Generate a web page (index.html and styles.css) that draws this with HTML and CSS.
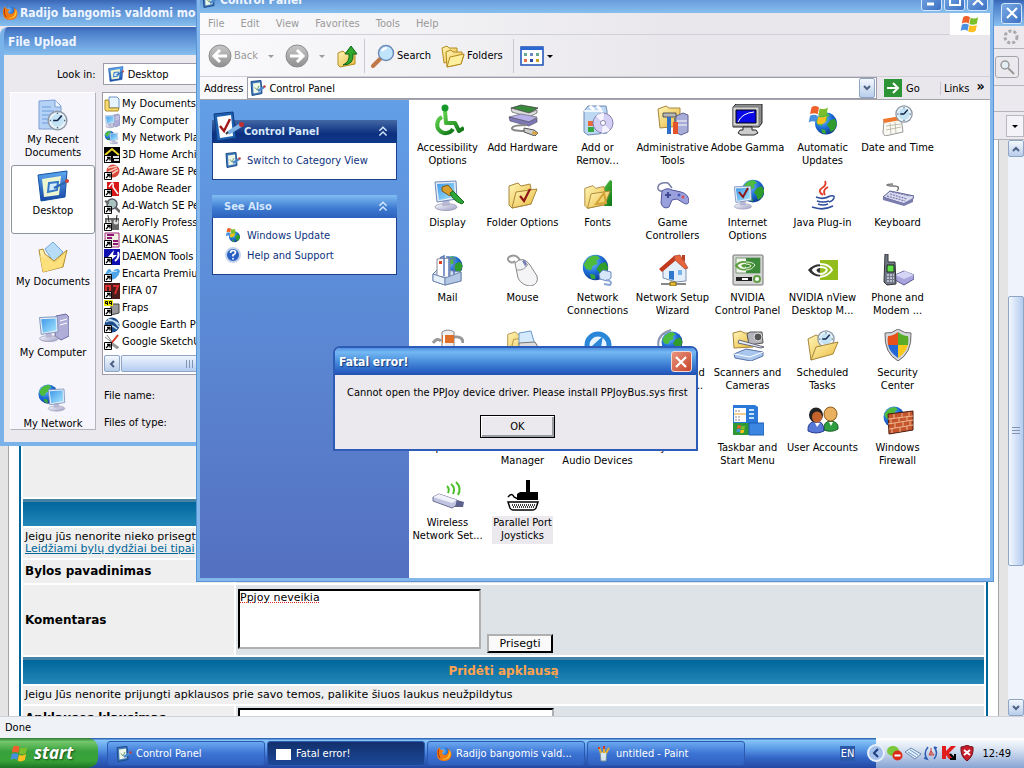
FILE: index.html
```html
<!DOCTYPE html>
<html lang="en">
<head>
    <meta charset="UTF-8" />
    <meta name="viewport" content="width=device-width, initial-scale=1" />
    <title>Desktop</title>
    <link rel="stylesheet" href="styles.css">
</head>
<body>
    <!-- Shared icons -->
    <svg class="sprite" width="0" height="0" aria-hidden="true">
        <defs>
            <radialGradient id="gGlobe" cx=".35" cy=".3" r=".8"><stop offset="0" stop-color="#7cc4ff"/><stop offset=".5" stop-color="#1f6fd8"/><stop offset="1" stop-color="#0a2f86"/></radialGradient>
            <linearGradient id="gFolder" x1="0" y1="0" x2="1" y2="1"><stop offset="0" stop-color="#fff6b8"/><stop offset="1" stop-color="#eab93c"/></linearGradient>
            <linearGradient id="gScreen" x1="0" y1="0" x2="1" y2="1"><stop offset="0" stop-color="#3f98e8"/><stop offset="1" stop-color="#a8e8ff"/></linearGradient>
            <linearGradient id="gSilver" x1="0" y1="0" x2="1" y2="1"><stop offset="0" stop-color="#ffffff"/><stop offset="1" stop-color="#9a9cc4"/></linearGradient>
            <linearGradient id="gBlue" x1="0" y1="0" x2="0" y2="1"><stop offset="0" stop-color="#5fa8f0"/><stop offset="1" stop-color="#1646a8"/></linearGradient>
            <linearGradient id="gGreen" x1="0" y1="0" x2="1" y2="1"><stop offset="0" stop-color="#5fd04c"/><stop offset="1" stop-color="#0c7414"/></linearGradient>
            <linearGradient id="gGray" x1="0" y1="0" x2="0" y2="1"><stop offset="0" stop-color="#c8c8c8"/><stop offset="1" stop-color="#8f8f8f"/></linearGradient>
        </defs>
        <symbol id="globe" viewBox="0 0 32 32"><circle cx="16" cy="16" r="14" fill="url(#gGlobe)"/><path d="M6 8q5-6 12-5l3 3-4 2 1 4-5 2-2 5-5-1-3-5z" fill="#4dbb3c"/><path d="M21 12l6-2 3 6-3 8-5 3-2-6-3-3z" fill="#2f9c2c"/><path d="M10 23l5 1 1 5-5-1z" fill="#3aa834"/></symbol>
        <symbol id="flag" viewBox="0 0 32 32"><path d="M5 5q5-4 11 0l-2 10q-5-3-11 0z" fill="#f0602a"/><path d="M17 6q6 3 12-1l-2 10q-6 4-12 1z" fill="#7bc02c"/><path d="M3 17q5-3 11 0l-2 10q-5-4-11 0z" fill="#4a90e0"/><path d="M15 18q6 3 12-1l-2 10q-6 4-12 1z" fill="#fbc020"/></symbol>
        <symbol id="folder" viewBox="0 0 32 32"><path d="M2 7l9-3 3 3 9-2 1 4v16L5 29 2 26z" fill="url(#gFolder)" stroke="#a8863a"/><path d="M9 13l21-3-6 15L5 29z" fill="url(#gFolder)" stroke="#a8863a"/></symbol>
        <symbol id="monitor" viewBox="0 0 32 32"><ellipse cx="14" cy="28" rx="11" ry="3.5" fill="url(#gSilver)" stroke="#8888a8" stroke-width=".7"/><path d="M11 20h6l1 7h-8z" fill="#b8b8d4"/><path d="M3 3l21-1 1 18-20 3z" fill="#e4ecf6" stroke="#7088b8"/><path d="M5 5l17-1 1 14-16 3z" fill="url(#gScreen)"/></symbol>
        <symbol id="checkpad" viewBox="0 0 32 32"><path d="M2 3l19-2 3 26-19 3z" fill="#1d5fb0" stroke="#0e3c80"/><path d="M5 6l14-2 2 21-13 2z" fill="#fff"/><path d="M8 15l4 5 6-12" fill="none" stroke="#a01818" stroke-width="2.4"/><path d="M16 22l13-8" stroke="#7fb2e6" stroke-width="4"/><path d="M14 23l2-2" stroke="#333" stroke-width="2"/><circle cx="29.500" cy="13.500" r="2.500" fill="#c03030"/></symbol>
        <symbol id="padsmall" viewBox="0 0 16 16"><path d="M1 1.500l10-1 1 13-10 2z" fill="#3f78bc" stroke="#1c4c88"/><path d="M3 3.500l7-1 .5 9.500-7 1.500z" fill="#eef6e4"/><path d="M5 7.500l2 2.500 2-4" fill="none" stroke="#6c9c7c"/><path d="M8 11l6-4" stroke="#4c88cc" stroke-width="2.500"/><circle cx="14.500" cy="6.500" r="1.300" fill="#c04040"/></symbol>
        <symbol id="desk" viewBox="0 0 32 32"><path d="M1 5l29-4-2 26-24 4z" fill="url(#gBlue)" stroke="#1250a0"/><path d="M5 9l19-3-2 19-15 2z" fill="#eef6d0"/><path d="M12 13l9-1-1 8-9 2z" fill="#d4ebff" stroke="#3478c8" stroke-width="2"/><path d="M17 18l12-6" stroke="#2f68b0" stroke-width="2.500"/><circle cx="30" cy="11" r="2" fill="#c43"/></symbol>
        <symbol id="clock" viewBox="0 0 32 32"><circle cx="16" cy="16" r="14" fill="#8d98a6"/><circle cx="16" cy="16" r="12" fill="#e8f3fa"/><circle cx="16" cy="16" r="9" fill="#c3e2f4"/><path d="M16 16l6-7M16 16h-6" stroke="#124" stroke-width="2.200"/><path d="M16 5v2M16 25v2M5 16h2M25 16h2" stroke="#567" stroke-width="2"/></symbol>
        <symbol id="firefox" viewBox="0 0 32 32"><circle cx="17" cy="15" r="12" fill="url(#gGlobe)"/><path d="M2 10q1-5 5-7 0 4 4 5 4 0 5 2-3 1-4 3 0 4 5 5 6 0 7-6 1-4-2-7 8 3 9 11 0 13-14 14Q3 30 2 18z" fill="#ef7a12"/><path d="M28 8q3 9-2 15-6 6-14 3 10 0 13-7 2-5 3-11z" fill="#ffc83a"/><path d="M5 7q-3 10 3 17" stroke="#a83008" stroke-width="2" fill="none"/></symbol>
        <symbol id="access" viewBox="0 0 32 32"><g fill="none" stroke="url(#gGreen)" stroke-width="4" stroke-linejoin="round"><path d="M13 7l1 12h9l4 8 5-3"/><path d="M14 12h7"/><path d="M10 13a8.500 8.500 0 1 0 11 12"/></g><circle cx="13" cy="4" r="3.500" fill="#159a2a"/></symbol>
        <symbol id="hardware" viewBox="0 0 32 32"><path d="M4 4l10-3 17 3-9 5z" fill="#3a8a3c" stroke="#333" stroke-width=".7"/><path d="M4 4l18 5 8-3v3l-8 4-17-5z" fill="#ddd" stroke="#555" stroke-width=".7"/><path d="M2 13l12-3 16 3-8 5z" fill="#b8b0e8" stroke="#667" stroke-width=".7"/><path d="M2 13l20 5 8-4v4l-8 4-19-5z" fill="#7f78b8" stroke="#556" stroke-width=".7"/><path d="M20 21q-14 0-15 3t13 3" fill="none" stroke="#888" stroke-width="2"/><path d="M17 24l10 2 4 3-3 3-11-4z" fill="#ccc" stroke="#555"/><path d="M26 27l5 2-2 2-4-1z" fill="#d9a43a"/></symbol>
        <symbol id="addremove" viewBox="0 0 32 32"><path d="M2 7l4-5h18l1 5v22l-19 2-4-3z" fill="#bcd8f2" stroke="#6c8ab4"/><path d="M2 7h18v24" fill="none" stroke="#fff" stroke-width="1.500"/><path d="M8 2l4 4M15 2l4 4" stroke="#fff" stroke-width="3"/><path d="M6 17h5v5H6z" fill="#e86a3a"/><path d="M6 23h6v5H6z" fill="#36a844"/><circle cx="21" cy="19" r="10" fill="#d4cff4" stroke="#8580b0"/><path d="M21 19L14 12a10 10 0 0 1 8-3zM21 19l7 7a10 10 0 0 1-8 3z" fill="#f6f4ff"/><circle cx="21" cy="19" r="2.500" fill="#fff" stroke="#88a"/></symbol>
        <symbol id="admin" viewBox="0 0 32 32"><path d="M1 5l8-3 3 2h11v18L3 24z" fill="url(#gFolder)" stroke="#a8863a"/><path d="M19 12l7-3 5 2v17l-7 3-6-3z" fill="#a8acd8" stroke="#5d6290"/><path d="M20 17h10M20 21h10" stroke="#fff"/><path d="M6 9h13v4H6z" fill="#b8b8b8" stroke="#555"/><path d="M10 13h4v17h-4z" fill="#2e6fc8"/><path d="M18 14v8" stroke="#777" stroke-width="2"/><path d="M16 18h5v12h-5z" fill="#e4532a"/></symbol>
        <symbol id="gamma" viewBox="0 0 32 32"><path d="M1 3l3-3h26v19l-3 4H1z" fill="#8c8c8c" stroke="#222"/><path d="M1 3h26v19H1z" fill="#d4d4d4" stroke="#777"/><path d="M4 6h20v13H4z" fill="#0808e8" stroke="#000"/><path d="M6 18Q10 9 22 8" fill="none" stroke="#fff"/><path d="M11 23h9v3h4l2 3-4 2H9l-3-2 2-3h3z" fill="#ccc" stroke="#222"/></symbol>
        <symbol id="update" viewBox="0 0 32 32"><use href="#globe" x="6" y="7" width="26" height="25"/><use href="#flag" x="0" y="0" width="24" height="22"/></symbol>
        <symbol id="date" viewBox="0 0 32 32"><path d="M2 16l17-3 2 15-18 4-2-3z" fill="#fbfbf4" stroke="#999"/><path d="M1 15l18-3v4L2 19z" fill="#f07830"/><path d="M4 22l15-2M4 26l15-3M8 19l1 11M13 18l1 11" stroke="#b5b0a0" stroke-width=".8"/><use href="#clock" x="12" y="0" width="20" height="20"/></symbol>
        <symbol id="display" viewBox="0 0 32 32"><use href="#monitor" x="0" y="0" width="32" height="32"/><path d="M10 8l6-2 6 7-4 4-8-5z" fill="#d8a030" stroke="#7d5a18"/><path d="M18 14l3-2 11 11-2 2q-9-3-12-11z" fill="#2fa638" stroke="#146c20"/></symbol>
        <symbol id="foldopt" viewBox="0 0 32 32"><use href="#folder" x="0" y="0" width="32" height="32"/><path d="M13 17l4 5 6-12" fill="none" stroke="#8e1616" stroke-width="2.200"/></symbol>
        <symbol id="fonts" viewBox="0 0 32 32"><path d="M18 14L28 1l2 1v25h-8z" fill="url(#gGreen)"/><use href="#folder" x="0" y="3" width="31" height="29"/><path d="M14 25l8-11 2 10z" fill="none" stroke="#d3a338" stroke-width="2"/></symbol>
        <symbol id="game" viewBox="0 0 32 32"><path d="M8 12Q0 13 1 8t10-4l4 5" fill="none" stroke="#777ca4" stroke-width="1.500"/><path d="M5 12q5-4 10-1l9 2q8 2 8 10-2 4-7 0l-5-3-5 1-3 7q-6 3-8-4z" fill="#9aa0dc" stroke="#50569c"/><path d="M8 16h6M11 13v6" stroke="#404894" stroke-width="2"/><circle cx="22" cy="16" r="1.500" fill="#4858b8"/><circle cx="26" cy="18" r="1.500" fill="#d85050"/></symbol>
        <symbol id="inet" viewBox="0 0 32 32"><use href="#globe" x="8" y="-1" width="26" height="26"/><use href="#monitor" x="0" y="4" width="25" height="28"/><path d="M7 13l4 5 5-9" fill="none" stroke="#8e1616" stroke-width="2"/></symbol>
        <symbol id="java" viewBox="0 0 32 32"><path d="M18 2q2 4-3 7t1 7M21 8q-6 3-3 8" fill="none" stroke="#e03a28" stroke-width="1.800"/><path d="M9 18q8 3 14-1M10 22q6 2 12 0M11 25q5 2 10 0M5 28q11 4 21-1" fill="none" stroke="#2f4e9e" stroke-width="1.700"/><path d="M23 17q5-1 4 2t-5 4" fill="none" stroke="#2f4e9e" stroke-width="1.400"/></symbol>
        <symbol id="keyboard" viewBox="0 0 32 32"><path d="M15 12q4-5-3-5T5 6t6-1" fill="none" stroke="#777" stroke-width="1.500"/><path d="M1 18l7-6 24 5-2 5-8 3z" fill="#dcdcf0" stroke="#55598c"/><path d="M1 18l21 6 9-5v4l-9 4-21-6z" fill="#7a7eac"/><path d="M5 17l18 5M8 15l17 5M10 13l18 4" stroke="#7c80b4" stroke-dasharray="2 1" stroke-width="1.300"/></symbol>
        <symbol id="mail" viewBox="0 0 32 32"><use href="#globe" x="9" y="0" width="23" height="24"/><path d="M1 20l5-5 23 3v9l-16 4L1 27z" fill="#cfe0f4" stroke="#7188b0"/><path d="M5 5l13-1v20l-13-2z" fill="#fff" stroke="#889"/><path d="M8 4l4-2v20M14 3h3v20M18 5l4-1v19" fill="none" stroke="#5a78b8" stroke-width="1.500"/><path d="M7 7h3v3H7z" fill="#e04020"/><path d="M1 20l12 4v7L1 27z" fill="#e6f0fb" stroke="#7188b0"/><path d="M13 24l16-6v9l-16 4z" fill="#b4c8e6" stroke="#7188b0"/></symbol>
        <symbol id="mouse" viewBox="0 0 32 32"><path d="M13 6Q9 0 4 2T2 7t6 0" fill="none" stroke="#999" stroke-width="2"/><path d="M8 9q8-8 15 2l7 11q2 8-6 10-9 0-13-8z" fill="#f4f4f6" stroke="#888"/><path d="M10 16q7 1 11-6M16 6q4 3 3 7" fill="none" stroke="#999"/><path d="M15 7l3-1 2 4-2 2z" fill="#7880b8"/></symbol>
        <symbol id="netconn" viewBox="0 0 32 32"><use href="#globe" x="-1" y="-1" width="29" height="29"/><path d="M17 20l4-4 8 2v6l-4 3-7-2z" fill="#d8e6fa" stroke="#6a8cc4"/><path d="M24 26q7 1 4 5l-6-1" fill="none" stroke="#8aa4d4" stroke-width="2"/></symbol>
        <symbol id="house" viewBox="0 0 32 32"><path d="M6 14l11-10 12 11v12l-10 1-13-4z" fill="#e4effa" stroke="#7d90b0"/><path d="M17 2L2 15l3 3L18 7z" fill="#c23a1c"/><path d="M17 2l6-1 8 13-3 1-10-9z" fill="#e8643c" stroke="#94301a" stroke-width=".6"/><path d="M25 1h3v7l-3-3z" fill="#b84024"/><path d="M12 17h5v9l-5-1z" fill="#2f78cc"/><path d="M21 16h4v5h-4z" fill="#78b4ee"/><path d="M4 30h25" stroke="#888" stroke-width="2"/><path d="M13 28h6v4h-6z" fill="#e4bb38" stroke="#806818"/></symbol>
        <symbol id="nveye" viewBox="0 0 32 20"><path d="M1 10q6-7 15-6 7 1 10 6-5 7-12 7Q6 17 1 10zm4 0q3 5 9 5 5-1 8-5-3-4-8-4-6 0-9 4zm5 0q2-3 5-2 3 0 3 2-2 3-4 3-3 0-4-3z" fill="currentColor" fill-rule="evenodd"/></symbol>
        <symbol id="nvidia" viewBox="0 0 32 32"><rect x="1" y="1" width="30" height="30" rx="1" fill="#d4d4d4" stroke="#777"/><path d="M4 4h24v15H4z" fill="#f2f8ee" stroke="#7a9a78"/><path d="M14 4h14v15H14z" fill="#3d8a3a"/><g color="#5b9c3c"><use href="#nveye" x="2" y="4" width="23" height="15"/></g><path d="M14 8q7 0 9 3-3 5-9 5M14 10q4 0 5 2-2 2-5 2" fill="none" stroke="#e4f4dc"/><rect x="4" y="23" width="16" height="4" fill="#222"/><path d="M10 24h6v2h-6z" fill="#fff"/><circle cx="25" cy="25" r="3" fill="#fff" stroke="#62a044" stroke-width="2"/></symbol>
        <symbol id="nview" viewBox="0 0 32 32"><g color="#333"><use href="#nveye" x="0" y="5" width="30" height="22"/></g><path d="M13 6h18v20H13z" fill="#93bd1c"/><path d="M13 10q9 0 12 6-4 6-12 7M13 13q6 0 7 3-2 4-7 4" fill="none" stroke="#fff" stroke-width="1.800"/></symbol>
        <symbol id="phone" viewBox="0 0 32 32"><path d="M13 21l9-4 10 4v4l-10 6-9-5z" fill="#a8a4dc" stroke="#5a5890"/><path d="M13 21l9 4 10-4-9-4z" fill="#d6d4f4"/><path d="M3 0h3v8h7l1 22-9 1L2 28z" fill="#71788a" stroke="#333"/><path d="M5 11h7v7H5z" fill="#5de048" stroke="#222"/><path d="M5 21h7M5 24h7M5 27h7" stroke="#d4d8e0" stroke-dasharray="2 1" stroke-width="1.500"/></symbol>
        <symbol id="power" viewBox="0 0 32 32"><path d="M1 14q4-6 8-2M22 8q9-1 9 6" fill="none" stroke="#999" stroke-width="3"/><path d="M10 3q6-4 12 0v25H10z" fill="#eee" stroke="#888"/><path d="M10 6h12v8H10z" fill="#e07028"/><path d="M12 5v22" stroke="#fff" stroke-width="2"/></symbol>
        <symbol id="printers" viewBox="0 0 32 32"><use href="#folder" x="-1" y="-2" width="27" height="30"/><path d="M12 4l12-2 4 14H12z" fill="#d5eafc" stroke="#6b9acb"/><path d="M12 14l16-1 3 5-5 8H12z" fill="#ddd" stroke="#777"/></symbol>
        <symbol id="quicktime" viewBox="0 0 32 32"><circle cx="16" cy="16" r="11" fill="#e8f4ff" stroke="#2a86d8" stroke-width="5"/><path d="M10 17L21 7l-2 11z" fill="#2a86d8"/></symbol>
        <symbol id="region" viewBox="0 0 32 32"><use href="#globe" x="3" y="1" width="24" height="24"/><path d="M14 1Q-2 6 2 20t22 7" fill="none" stroke="#8b93b0" stroke-width="2"/></symbol>
        <symbol id="scanner" viewBox="0 0 32 32"><path d="M1 4l8-2 3 2h9v14L2 19z" fill="url(#gFolder)" stroke="#a8863a"/><path d="M15 5l3-2h12l1 11-14 2z" fill="#b4b4bc" stroke="#555"/><circle cx="26" cy="8" r="4" fill="#555" stroke="#ddd"/><path d="M7 11l25 7-3 1L6 14z" fill="#e4f0fc" stroke="#667"/><path d="M2 25l12-5 17 3v4l-12 5L3 29z" fill="#a9c6ee" stroke="#5a74a4"/><path d="M2 25l16 3 13-5" fill="none" stroke="#fff"/></symbol>
        <symbol id="sched" viewBox="0 0 32 32"><path d="M1 10l8-4 4 2 12 1v12L4 31z" fill="url(#gFolder)" stroke="#a8863a"/><use href="#clock" x="9" y="0" width="20" height="20"/><path d="M9 18l22-5-5 12L4 31z" fill="url(#gFolder)" stroke="#a8863a"/></symbol>
        <symbol id="shield" viewBox="0 0 32 32"><path d="M16 0q7 5 13 4 1 20-13 28Q2 24 3 4q7 1 13-4z" fill="#d4d8de" stroke="#666"/><path d="M16 3v13H6Q5 11 6 7q5 0 10-4z" fill="#e8501c"/><path d="M16 3q5 4 10 4 1 4 0 9H16z" fill="#58ac28"/><path d="M6 16h10v13Q8 24 6 16z" fill="#2468d8"/><path d="M26 16H16v13q8-5 10-13z" fill="#f8c81c"/></symbol>
        <symbol id="taskmenu" viewBox="0 0 32 32"><path d="M1 1h22l3 2v19H1z" fill="#2a78d8"/><path d="M2 4h12v14H2z" fill="#fff"/><path d="M2 10h12" stroke="#e8a020"/><path d="M3 7h6M3 13h6M3 16h6" stroke="#888" stroke-dasharray="2 1"/><path d="M17 6h5M17 10h5M17 14h5" stroke="#bfe0ff" stroke-width="2"/><path d="M1 19h17v12H1z" fill="#2e9a34"/><path d="M17 19h15v12H17z" fill="#3a86e0" stroke="#1c5cb4"/><use href="#flag" x="4" y="20" width="10" height="10"/></symbol>
        <symbol id="users" viewBox="0 0 32 32"><path d="M17 26q-1-9 7-9 8 1 7 8-6 4-14 1z" fill="#2f9e40" stroke="#186026"/><ellipse cx="23.500" cy="10" rx="6.500" ry="7" fill="#e8b060" stroke="#8c5a18"/><path d="M1 27q-1-9 8-10 8 0 8 10-8 4-16 0z" fill="#5878d8" stroke="#2a3c90"/><ellipse cx="9" cy="11" rx="7" ry="7.500" fill="#222"/><ellipse cx="10" cy="13" rx="5" ry="5.500" fill="#c4642c"/><path d="M8 19l2 4 3-4M22 18l2 4 2-4" fill="#fff"/></symbol>
        <symbol id="firewall" viewBox="0 0 32 32"><use href="#globe" x="0" y="1" width="24" height="24"/><path d="M6 10l25-3v19L7 30z" fill="#c4552c" stroke="#4e1c10"/><path d="M6 15l25-3M6 20l25-4M7 25l24-4M12 10v5M20 9v4M27 8v4M9 15v5M17 13v5M25 12v5M13 19v5M21 18v5M28 16v5M10 24v5M18 23v5M25 22v4" stroke="#f0b690" stroke-width="1"/></symbol>
        <symbol id="wifi" viewBox="0 0 32 32"><path d="M15 7q3 3 1 7M19 5q5 4 2 10M24 3q6 6 2 13" fill="none" stroke="#4dbf2c" stroke-width="2"/><path d="M1 18l6-3 18 6v5l-5 3-19-7z" fill="#c0c4e0" stroke="#6c7094"/><path d="M1 18l6-3 18 6-5 3z" fill="#f0f2fa"/><path d="M25 21l7 2-1 5-8 0z" fill="#5d628c"/></symbol>
        <symbol id="joystick" viewBox="0 0 32 32"><path d="M19 1h4v12h8v8H10v-6l3-2h6z" fill="#000"/><path d="M1 18q4-5 6 0l4 2" fill="none" stroke="#000" stroke-width="1.500"/><path d="M1 23h30l-2 6q-1 2-3 2H6q-2 0-3-2z" fill="#fff" stroke="#000" stroke-width="1.500"/><path d="M5 26h23M6 28h21" stroke="#000" stroke-dasharray="1 1" stroke-width="1.500"/></symbol>
        <symbol id="recent" viewBox="0 0 32 32"><path d="M2 2l16-1 6 6v23H2z" fill="#b4d2f6" stroke="#7c9cd0"/><path d="M18 1v7h6" fill="#eef6ff" stroke="#7c9cd0"/><path d="M5 8h9M5 12h12M5 16h8M5 20h8M5 24h8" stroke="#6f9bdc"/><use href="#clock" x="9" y="10" width="23" height="23"/></symbol>
        <symbol id="mydocs" viewBox="0 0 32 32"><path d="M8 8l8-7 10 10-9 11z" fill="#b6dcf8" stroke="#72a6d4"/><path d="M2 9l4-1 2 5 9 7 13-11-4 17L6 31z" fill="url(#gFolder)" stroke="#b08a30"/><path d="M3 15l15 7 11-11-4 15L6 31z" fill="#fbe07c"/></symbol>
        <symbol id="computer" viewBox="0 0 32 32"><path d="M19 4l10-2 3 3v19l-8 4-6-4z" fill="#aeaed8" stroke="#6c6ca0"/><path d="M23 9l7-2M23 13l7-2" stroke="#fff"/><use href="#monitor" x="0" y="1" width="27" height="31"/></symbol>
        <symbol id="network" viewBox="0 0 32 32"><use href="#globe" x="0" y="0" width="22" height="22"/><use href="#monitor" x="9" y="1" width="24" height="31"/></symbol>
        <symbol id="docs" viewBox="0 0 16 16"><path d="M5 1h8l2 2v9H5z" fill="#e8f4ff" stroke="#6b96c8"/><path d="M1 4h3l1 2v6h10l-1 3H2l-1-1z" fill="#f8dc70" stroke="#a8882c"/></symbol>
        <symbol id="cut" viewBox="0 0 16 16"><path d="M.5 8.500h7v7h-7z" fill="#fff" stroke="#000"/><path d="M2 14l3-3M3 10.500h3v3" fill="none" stroke="#000" stroke-width="1.300"/></symbol>
        <symbol id="home3d" viewBox="0 0 16 16"><path d="M0 0h16v16H0z"/><path d="M1 8l7-6 7 6" fill="none" stroke="#f0d828" stroke-width="2"/><path d="M9 10h6M10 13h5" stroke="#ddd" stroke-width="2"/><use href="#cut"/></symbol>
        <symbol id="adaware" viewBox="0 0 16 16"><circle cx="9" cy="7" r="6.500" fill="#d84838"/><path d="M4 4l9-2M4 8l9-4M6 11l8-5" stroke="#f6c4b8" stroke-width="1.500"/><use href="#cut"/></symbol>
        <symbol id="reader" viewBox="0 0 16 16"><path d="M3 1h12v14H3z" fill="#d81818"/><path d="M5 6q5-8 4 0l5 7" fill="none" stroke="#fff" stroke-width="1.500"/><use href="#cut"/></symbol>
        <symbol id="adwatch" viewBox="0 0 16 16"><circle cx="8" cy="6" r="5" fill="#a9c4c0" stroke="#556" stroke-width="1.500"/><path d="M11 9l5 5M1 3l4 2" stroke="#666" stroke-width="2.500"/><use href="#cut"/></symbol>
        <symbol id="aerofly" viewBox="0 0 16 16"><path d="M1 3h14v12H1z" fill="#666"/><circle cx="5" cy="7" r="2.500" fill="#ddd"/><circle cx="12" cy="7" r="2.500" fill="#ddd"/><path d="M5 7l-1-7M12 7l1-7" stroke="#222"/><use href="#cut"/></symbol>
        <symbol id="alkonas" viewBox="0 0 16 16"><path d="M1 1h14v14H1z" fill="#f0f0e0" stroke="#a0287c"/><path d="M3 3h7M3 6h5M9 9h5M9 12h5" stroke="#8c1474" stroke-width="2"/><use href="#cut"/></symbol>
        <symbol id="daemon" viewBox="0 0 16 16"><path d="M0 0h16v16H0z" fill="#1010b0"/><path d="M10 1L4 8h4l-3 5 8-7H9z" fill="#fff"/><path d="M14 3q2 5-3 9" fill="none" stroke="#fff" stroke-width="2"/><use href="#cut"/></symbol>
        <symbol id="encarta" viewBox="0 0 16 16"><path d="M1 9q4-10 7-3 6-6 8-1-2 9-11 9z" fill="#4ea4e8"/><path d="M4 8q4-3 9-3" stroke="#cfeaff" fill="none"/><use href="#cut"/></symbol>
        <symbol id="fifa" viewBox="0 0 16 16"><path d="M0 0h16v16H0z" fill="#4a1c1c"/><path d="M2 3h4v7H2zM9 3h5l-3 8" fill="none" stroke="#d83030" stroke-width="2"/><use href="#cut"/></symbol>
        <symbol id="fraps" viewBox="0 0 16 16"><path d="M7 4h8v9l-8 2z" fill="#999" stroke="#444"/><path d="M0 0h9v6H0z" fill="#f0e800"/><path d="M1.500 1.500h2v2h-2zM3.500 3v2M5.500 1.500h2v2h-2zM7.500 3v2" fill="none" stroke="#000"/><use href="#cut"/></symbol>
        <symbol id="earth" viewBox="0 0 16 16"><circle cx="8" cy="8" r="7.500" fill="#1c4c8c"/><path d="M2 5q6-4 13 2M4 2q7 1 11 8M1 9q7-2 12 3" fill="none" stroke="#c4e0f4" stroke-width="1.500"/><use href="#cut"/></symbol>
        <symbol id="sketch" viewBox="0 0 16 16"><path d="M1 3l14 11M3 1l10 14" stroke="#888"/><path d="M14 1L6 11" stroke="#d83424" stroke-width="2"/><path d="M8 10l6 4" stroke="#999" stroke-width="3"/><use href="#cut"/></symbol>
        <symbol id="help" viewBox="0 0 16 16"><circle cx="8" cy="8" r="7" fill="#2860c4" stroke="#c4d4ec" stroke-width="2"/><path d="M5.500 6q0-2.500 2.500-2.500t2.500 2Q10.500 7 8 8v1.500M8 11v1.500" fill="none" stroke="#fff" stroke-width="1.700"/></symbol>
        <symbol id="back" viewBox="0 0 24 24"><circle cx="12" cy="12" r="11" fill="url(#gGray)" stroke="#8c8c8c"/><path d="M19 12H7M12 6l-6 6 6 6" fill="none" stroke="#fff" stroke-width="3"/></symbol>
        <symbol id="forward" viewBox="0 0 24 24"><circle cx="12" cy="12" r="11" fill="url(#gGray)" stroke="#8c8c8c"/><path d="M5 12h12M12 6l6 6-6 6" fill="none" stroke="#fff" stroke-width="3"/></symbol>
        <symbol id="up" viewBox="0 0 24 24"><path d="M2 9l5-2 2 2h10v11L4 23l-2-2z" fill="url(#gFolder)" stroke="#b48c20"/><path d="M7 21q7-3 6-11H9l6-8 6 8h-4q1 11-10 11z" fill="#2fa82c" stroke="#10641a"/></symbol>
        <symbol id="search" viewBox="0 0 24 24"><path d="M10 14L2 22" stroke="#c07848" stroke-width="4" stroke-linecap="round"/><circle cx="15" cy="9" r="7.500" fill="#c0e4fb" stroke="#6d8cb8" stroke-width="1.500"/><path d="M11 7q2-3 5-3" fill="none" stroke="#fff" stroke-width="2"/></symbol>
        <symbol id="folders" viewBox="0 0 24 24"><path d="M1 4l5-2 2 2h8v12L3 19z" fill="url(#gFolder)" stroke="#b48c20"/><path d="M5 8l5-2 2 2h9v3l2 0-3 9-14 3z" fill="url(#gFolder)" stroke="#b48c20"/><path d="M9 13l14-3-3 10-14 3z" fill="#fff0a0" stroke="#b48c20"/></symbol>
        <symbol id="views" viewBox="0 0 24 20"><path d="M1 1h22v18H1z" fill="#fff" stroke="#1c50b8" stroke-width="1.500"/><path d="M1 1h22v3H1z" fill="#2b68d0"/><path d="M4 7h3v3H4zM16 7h3v3h-3z" fill="#6aa890"/><path d="M10 7h3v3h-3z" fill="#6c8ac8"/><path d="M4 13h3v3H4z" fill="#e07040"/><path d="M10 13h3v3h-3z" fill="#2848a8"/><path d="M16 13h3v3h-3z" fill="#c8a020"/></symbol>
        <symbol id="down" viewBox="0 0 8 8"><path d="M1 2l3 3 3-3" fill="none" stroke="#4d6185" stroke-width="2"/></symbol>
        <symbol id="tri" viewBox="0 0 8 8"><path d="M1 3h6L4 6z" fill="currentColor"/></symbol>
        <symbol id="chev" viewBox="0 0 10 10"><path d="M2 4l3-3 3 3M2 8l3-3 3 3" fill="none" stroke="currentColor" stroke-width="1.200"/></symbol>
        <symbol id="cross" viewBox="0 0 16 16"><path d="M3 3l10 10M13 3L3 13" stroke="#fff" stroke-width="2.200"/></symbol>
        <symbol id="paint" viewBox="0 0 16 16"><path d="M4 6h7l-1 9H5z" fill="#dce8f0" stroke="#7890a0"/><path d="M5 7L3 1M8 7V1M10 7l3-5" stroke="#e8b030" stroke-width="2"/><path d="M3 3V1M8 3V0" stroke="#d44020" stroke-width="2"/></symbol>
    </svg>

    <div class="desktop">
        <main class="workspace">

            <!-- Browser -->
            <section class="browser">
                <header class="titlebar inactive">
                    <svg class="i16"><use href="#firefox"/></svg>
                    <h1>Radijo bangomis valdomi modeliai</h1>
                    <button class="cap" aria-label="Close browser"><svg class="i16"><use href="#cross"/></svg></button>
                </header>
                <div class="bar bar-menu">
                    <svg class="i16" viewBox="0 0 16 16"><circle cx="8" cy="8" r="6" fill="none" stroke="#aaa" stroke-width="3" stroke-dasharray="3 2"/></svg>
                </div>
                <div class="bar bar-nav">
                    <button class="find" aria-label="Search"><svg class="i16" viewBox="0 0 16 16"><circle cx="6" cy="6" r="4" fill="#e4eef6" stroke="#999" stroke-width="1.500"/><path d="M9 9l6 6" stroke="#999" stroke-width="2"/></svg></button>
                </div>
                <div class="bar bar-marks"></div>
                <div class="bar bar-tabs"><button class="alltabs" aria-label="All tabs"><svg class="i8"><use href="#tri"/></svg></button></div>
                <div class="view">
                    <div class="page">
                        <div class="sheet">
                            <div class="blank"></div>
                            <div class="band"></div>
                            <div class="note">Jeigu jūs nenorite nieko prisegti, palikite laukus tuščius<br><a href="#">Leidžiami bylų dydžiai bei tipai</a></div>
                            <div class="row short"><b>Bylos pavadinimas</b><span class="cell"></span></div>
                            <div class="row tall">
                                <label for="comment">Komentaras</label>
                                <span class="cell"><textarea id="comment" spellcheck="false">Ppjoy neveikia</textarea><button class="attach">Prisegti</button></span>
                            </div>
                            <div class="band">Pridėti apklausą</div>
                            <div class="note">Jeigu Jūs nenorite prijungti apklausos prie savo temos, palikite šiuos laukus neužpildytus</div>
                            <div class="row"><label for="poll">Apklausos klausimas</label><span class="cell"><input id="poll" type="text"></span></div>
                        </div>
                    </div>
                    <div class="vscroll">
                        <button aria-label="Scroll up"><svg class="i8 flip"><use href="#down"/></svg></button>
                        <div class="track"><div class="thumb"><svg class="i8" viewBox="0 0 8 8"><path d="M0 .5h8M0 3.500h8M0 6.500h8" stroke="#8294b4"/></svg></div></div>
                        <button aria-label="Scroll down"><svg class="i8"><use href="#down"/></svg></button>
                    </div>
                </div>
                <footer class="status">Done</footer>
            </section>

            <!-- File Upload dialog -->
            <section class="upload">
                <header class="titlebar inactive"><h2>File Upload</h2></header>
                <div class="upload-body">
                    <div class="lookin"><label for="look">Look in:</label><button class="combo" id="look"><svg class="i16"><use href="#desk"/></svg>Desktop</button></div>
                    <nav class="places">
                        <a href="#"><svg class="i32"><use href="#recent"/></svg>My Recent<br>Documents</a>
                        <a href="#" class="on"><svg class="i32"><use href="#desk"/></svg>Desktop</a>
                        <a href="#"><svg class="i32"><use href="#mydocs"/></svg>My Documents</a>
                        <a href="#"><svg class="i32"><use href="#computer"/></svg>My Computer</a>
                        <a href="#"><svg class="i32"><use href="#network"/></svg>My Network</a>
                    </nav>
                    <div class="files">
                        <div class="listbox">
                            <ul>
                                <li><svg class="i16"><use href="#docs"/></svg>My Documents</li>
                                <li><svg class="i16"><use href="#computer"/></svg>My Computer</li>
                                <li><svg class="i16"><use href="#network"/></svg>My Network Places</li>
                                <li><svg class="i16"><use href="#home3d"/></svg>3D Home Architect</li>
                                <li><svg class="i16"><use href="#adaware"/></svg>Ad-Aware SE Personal</li>
                                <li><svg class="i16"><use href="#reader"/></svg>Adobe Reader</li>
                                <li><svg class="i16"><use href="#adwatch"/></svg>Ad-Watch SE Personal</li>
                                <li><svg class="i16"><use href="#aerofly"/></svg>AeroFly Professional</li>
                                <li><svg class="i16"><use href="#alkonas"/></svg>ALKONAS</li>
                                <li><svg class="i16"><use href="#daemon"/></svg>DAEMON Tools</li>
                                <li><svg class="i16"><use href="#encarta"/></svg>Encarta Premium</li>
                                <li><svg class="i16"><use href="#fifa"/></svg>FIFA 07</li>
                                <li><svg class="i16"><use href="#fraps"/></svg>Fraps</li>
                                <li><svg class="i16"><use href="#earth"/></svg>Google Earth Pro</li>
                                <li><svg class="i16"><use href="#sketch"/></svg>Google SketchUp</li>
                            </ul>
                            <div class="hscroll"><button aria-label="Scroll left"><svg class="i8 left"><use href="#down"/></svg></button><div class="hthumb"><svg class="i8" viewBox="0 0 8 8"><path d="M.5 0v8M3.500 0v8M6.500 0v8" stroke="#8294b4"/></svg></div></div>
                        </div>
                        <p>File name:</p>
                        <p>Files of type:</p>
                    </div>
                </div>
            </section>

            <!-- Control Panel -->
            <section class="panel">
                <header class="titlebar inactive">
                    <svg class="i16"><use href="#padsmall"/></svg>
                    <h2>Control Panel</h2>
                    <button class="cap" aria-label="Minimize"><svg class="i16" viewBox="0 0 16 16"><path d="M3 12h7" stroke="#fff" stroke-width="3"/></svg></button>
                    <button class="cap" aria-label="Maximize"><svg class="i16" viewBox="0 0 16 16"><path d="M3 3h10v10H3z" fill="none" stroke="#fff" stroke-width="2"/></svg></button>
                    <button class="cap" aria-label="Close"><svg class="i16"><use href="#cross"/></svg></button>
                </header>
                <nav class="menu">
                    <a href="#">File</a><a href="#">Edit</a><a href="#">View</a><a href="#">Favorites</a><a href="#">Tools</a><a href="#">Help</a>
                    <span class="brand"><svg><use href="#flag"/></svg></span>
                </nav>
                <div class="tools">
                    <button class="off"><svg class="i24"><use href="#back"/></svg>Back<svg class="i8 drop"><use href="#tri"/></svg></button>
                    <button class="off" aria-label="Forward"><svg class="i24"><use href="#forward"/></svg><svg class="i8 drop"><use href="#tri"/></svg></button>
                    <button class="go-up" aria-label="Up"><svg class="i24"><use href="#up"/></svg></button>
                    <button class="split"><svg class="i24"><use href="#search"/></svg>Search</button>
                    <button><svg class="i24"><use href="#folders"/></svg>Folders</button>
                    <button class="split" aria-label="Views"><svg class="i24"><use href="#views"/></svg><svg class="i8"><use href="#tri"/></svg></button>
                </div>
                <div class="address">
                    <label for="addr">Address</label>
                    <div class="addrbox"><svg class="i16"><use href="#padsmall"/></svg><input id="addr" type="text" value="Control Panel"><button aria-label="Show addresses"><svg class="i8"><use href="#down"/></svg></button></div>
                    <button class="go"><svg viewBox="0 0 18 18"><path d="M0 0h18v18H0z" fill="#2c9434"/><path d="M3 9h11M9 4l5 5-5 5" fill="none" stroke="#fff" stroke-width="2"/></svg>Go</button>
                    <span class="links">Links <b>»</b></span>
                </div>
                <div class="explorer">
                    <aside>
                        <div class="task primary">
                            <h3><svg class="i32"><use href="#checkpad"/></svg>Control Panel<svg class="chev"><use href="#chev"/></svg></h3>
                            <a href="#"><svg class="i16"><use href="#padsmall"/></svg>Switch to Category View</a>
                        </div>
                        <div class="task">
                            <h3>See Also<svg class="chev"><use href="#chev"/></svg></h3>
                            <a href="#"><svg class="i16"><use href="#update"/></svg>Windows Update</a>
                            <a href="#"><svg class="i16"><use href="#help"/></svg>Help and Support</a>
                        </div>
                    </aside>
                    <div class="icons">
                        <a href="#"><svg class="i32"><use href="#access"/></svg><span>Accessibility<br>Options</span></a>
                        <a href="#"><svg class="i32"><use href="#hardware"/></svg><span>Add Hardware</span></a>
                        <a href="#"><svg class="i32"><use href="#addremove"/></svg><span>Add or<br>Remov...</span></a>
                        <a href="#"><svg class="i32"><use href="#admin"/></svg><span>Administrative<br>Tools</span></a>
                        <a href="#"><svg class="i32"><use href="#gamma"/></svg><span>Adobe Gamma</span></a>
                        <a href="#"><svg class="i32"><use href="#update"/></svg><span>Automatic<br>Updates</span></a>
                        <a href="#"><svg class="i32"><use href="#date"/></svg><span>Date and Time</span></a>
                        <a href="#"><svg class="i32"><use href="#display"/></svg><span>Display</span></a>
                        <a href="#"><svg class="i32"><use href="#foldopt"/></svg><span>Folder Options</span></a>
                        <a href="#"><svg class="i32"><use href="#fonts"/></svg><span>Fonts</span></a>
                        <a href="#"><svg class="i32"><use href="#game"/></svg><span>Game<br>Controllers</span></a>
                        <a href="#"><svg class="i32"><use href="#inet"/></svg><span>Internet<br>Options</span></a>
                        <a href="#"><svg class="i32"><use href="#java"/></svg><span>Java Plug-in</span></a>
                        <a href="#"><svg class="i32"><use href="#keyboard"/></svg><span>Keyboard</span></a>
                        <a href="#"><svg class="i32"><use href="#mail"/></svg><span>Mail</span></a>
                        <a href="#"><svg class="i32"><use href="#mouse"/></svg><span>Mouse</span></a>
                        <a href="#"><svg class="i32"><use href="#netconn"/></svg><span>Network<br>Connections</span></a>
                        <a href="#"><svg class="i32"><use href="#house"/></svg><span>Network Setup<br>Wizard</span></a>
                        <a href="#"><svg class="i32"><use href="#nvidia"/></svg><span>NVIDIA<br>Control Panel</span></a>
                        <a href="#"><svg class="i32"><use href="#nview"/></svg><span>NVIDIA nView<br>Desktop M...</span></a>
                        <a href="#"><svg class="i32"><use href="#phone"/></svg><span>Phone and<br>Modem ...</span></a>
                        <a href="#"><svg class="i32"><use href="#power"/></svg><span>Power Options</span></a>
                        <a href="#"><svg class="i32"><use href="#printers"/></svg><span>Printers and<br>Faxes</span></a>
                        <a href="#"><svg class="i32"><use href="#quicktime"/></svg><span>QuickTime</span></a>
                        <a href="#"><svg class="i32"><use href="#region"/></svg><span>Regional and<br>Language ...</span></a>
                        <a href="#"><svg class="i32"><use href="#scanner"/></svg><span>Scanners and<br>Cameras</span></a>
                        <a href="#"><svg class="i32"><use href="#sched"/></svg><span>Scheduled<br>Tasks</span></a>
                        <a href="#"><svg class="i32"><use href="#shield"/></svg><span>Security<br>Center</span></a>
                        <a href="#"><svg class="i32"></svg><span>Speech</span></a>
                        <a href="#"><svg class="i32"></svg><span>Sound Effect<br>Manager</span></a>
                        <a href="#"><svg class="i32"></svg><span>Sounds and<br>Audio Devices</span></a>
                        <a href="#"><svg class="i32"></svg><span>System</span></a>
                        <a href="#"><svg class="i32"><use href="#taskmenu"/></svg><span>Taskbar and<br>Start Menu</span></a>
                        <a href="#"><svg class="i32"><use href="#users"/></svg><span>User Accounts</span></a>
                        <a href="#"><svg class="i32"><use href="#firewall"/></svg><span>Windows<br>Firewall</span></a>
                        <a href="#"><svg class="i32"><use href="#wifi"/></svg><span>Wireless<br>Network Set...</span></a>
                        <a href="#" class="picked"><svg class="i32"><use href="#joystick"/></svg><span>Parallel Port<br>Joysticks</span></a>
                    </div>
                </div>
            </section>

            <!-- Error message -->
            <section class="alert" role="alertdialog" aria-labelledby="alertTitle">
                <header class="titlebar">
                    <h2 id="alertTitle">Fatal error!</h2>
                    <button class="cap close" aria-label="Close message"><svg class="i16"><use href="#cross"/></svg></button>
                </header>
                <div class="alert-body">
                    <p>Cannot open the PPJoy device driver. Please install PPJoyBus.sys first</p>
                    <button class="ok">OK</button>
                </div>
            </section>
        </main>

        <footer class="taskbar">
            <button class="start"><svg><use href="#flag"/></svg>start</button>
            <div class="tasks">
                <button><svg class="i16"><use href="#padsmall"/></svg>Control Panel</button>
                <button class="active"><svg class="i16" viewBox="0 0 16 16"><path d="M0 3h15v11H0z" fill="#fff"/></svg>Fatal error!</button>
                <button><svg class="i16"><use href="#firefox"/></svg>Radijo bangomis vald...</button>
                <button><svg class="i16"><use href="#paint"/></svg>untitled - Paint</button>
            </div>
            <span class="lang">EN</span>
            <div class="tray">
                <button class="less" aria-label="Hide icons"><svg viewBox="0 0 18 18"><circle cx="9" cy="9" r="8" fill="#a4c0ea" stroke="#e8f0fc" stroke-width="2"/><path d="M11 5L7 9l4 4" fill="none" stroke="#1c3c80" stroke-width="2"/></svg></button>
                <svg class="i16" viewBox="0 0 16 16"><ellipse cx="6" cy="6" rx="6" ry="5" fill="#7cc83c"/><circle cx="10.500" cy="10.500" r="5" fill="#dc2c1c"/><path d="M7.500 10.500h6" stroke="#fff" stroke-width="2"/></svg>
                <svg class="i16" viewBox="0 0 16 16"><path d="M0 7l6-4 10 6-6 5z" fill="#e4eef8" stroke="#6c88b0"/><path d="M3 7l8 5M5 5l8 5" stroke="#6c9cc8"/></svg>
                <svg class="i16" viewBox="0 0 16 16"><path d="M5 2Q0 8 4 14l-3-1M11 2q5 6 0 12M11 2l3 1" fill="none" stroke="#2c5cb0" stroke-width="1.500"/><path d="M8 3v7M6 10l2-4 3 4z" stroke="#d03c34" fill="none"/></svg>
                <svg class="i16" viewBox="0 0 16 16"><path d="M1 1h4v5l5-5h5L8 8l5 6H8l-3-4v4H1z" fill="#e01c1c"/><path d="M9 9l5 5M14 9v5h-5" stroke="#000" stroke-width="2" fill="none"/></svg>
                <svg class="i16" viewBox="0 0 16 16"><path d="M8 0q3 2 6 2 1 9-6 14Q1 11 2 2q3 0 6-2z" fill="#c81c2c" stroke="#701018"/><path d="M5 5l6 5M11 5l-6 5" stroke="#fff" stroke-width="2"/></svg>
                <time>12:49</time>
            </div>
        </footer>
    </div>
</body>
</html>
```
FILE: styles.css
```css
* {
    box-sizing: border-box;
}

body {
    margin: 0;
    font-family: "DejaVu Sans Condensed", Tahoma, "DejaVu Sans", sans-serif;
    font-size: 11px;
    line-height: 13px;
    color: #000;
    overflow: hidden;
}

h1, h2, h3, p, ul {
    margin: 0;
    padding: 0;
    list-style: none;
}

button, input, textarea {
    font: inherit;
    color: inherit;
    margin: 0;
    padding: 0;
    border: 0;
    background: none;
}

a {
    color: inherit;
    text-decoration: none;
}

svg {
    display: block;
    flex: none;
}

.sprite { position: absolute; }
.i8 { width: 8px; height: 8px; }
.i16 { width: 16px; height: 16px; }
.i24 { width: 24px; height: 24px; }
.i32 { width: 32px; height: 32px; }
.flip { transform: rotate(180deg); }
.left { transform: rotate(90deg); }

.desktop {
    display: flex;
    flex-direction: column;
    height: 100vh;
}

.workspace {
    position: relative;
    flex: 1;
    min-height: 0;
    overflow: hidden;
}

/* Title bars */
.titlebar {
    display: flex;
    align-items: center;
    gap: 2px;
    flex: none;
    height: 28px;
    padding: 0 5px;
    color: #fff;
    background: linear-gradient(#5090e0, #74b8f4 15%, #4a8edc 50%, #2a62c4 85%, #2050b0);
}

.titlebar h1, .titlebar h2 {
    flex: 1;
    font-size: 12px;
    line-height: 16px;
    white-space: nowrap;
    text-shadow: 1px 1px 1px #123a80;
}

.titlebar.inactive {
    background: linear-gradient(#3a66b4, #4c80cc 20%, #6a9fdd 60%, #86bfee);
    color: #eef5ff;
}

.titlebar.inactive h1, .titlebar.inactive h2 {
    text-shadow: none;
}

.cap {
    display: grid;
    place-items: center;
    width: 21px;
    height: 21px;
    border: 1px solid #d4e6fa;
    border-radius: 3px;
    background: linear-gradient(135deg, #7aaae4, #3c70c4);
}

/* Browser */
.browser {
    display: flex;
    flex-direction: column;
    height: 100%;
    background: #ebe9ed;
}

.browser .titlebar {
    height: 26px;
    padding: 0 2px;
}

.bar {
    display: flex;
    align-items: center;
    justify-content: flex-end;
    flex: none;
    padding-right: 5px;
    border-bottom: 1px solid #b4b4bc;
}

.bar-menu { height: 23px; }
.bar-nav { height: 37px; }
.bar-marks { height: 26px; }
.bar-tabs { height: 28px; padding: 0; }

.find {
    display: grid;
    place-items: center;
    width: 24px;
    height: 22px;
    border: 1px solid #a4a4ac;
    border-radius: 3px;
}

.alltabs {
    display: grid;
    place-items: center;
    width: 18px;
    height: 22px;
    border: 1px solid #b8b8c0;
    background: #f4f4f8;
}

.view {
    display: flex;
    flex: 1;
    min-height: 0;
}

.page {
    flex: 1;
    overflow: hidden;
    padding: 0 9px 0 8px;
    background: #e4e4e4;
    font-family: "DejaVu Sans", Verdana, sans-serif;
}

.sheet {
    display: flex;
    flex-direction: column;
    gap: 2px;
    min-height: 100%;
    padding: 0 14px;
    border: 1px solid #a4a4a4;
    border-width: 0 1px;
    background: linear-gradient(90deg, #fff 10px, #006699 10px 12px, #fff 12px calc(100% - 12px), #006699 calc(100% - 12px) calc(100% - 10px), #fff calc(100% - 10px));
}

.sheet > * {
    flex: none;
}

.blank {
    height: 357px;
    background: #efefef;
}

.band {
    height: 27px;
    border-top: 3px solid #4682a4;
    background: linear-gradient(#00669c, #2488b8);
    color: #ffa34f;
    font-size: 12px;
    font-weight: bold;
    line-height: 22px;
    text-align: center;
}

.note {
    padding: 3px 2px;
    background: #efefef;
    line-height: 12px;
}

.note a {
    color: #006699;
    text-decoration: underline;
}

.row {
    display: flex;
    gap: 2px;
    font-size: 12px;
    font-weight: bold;
}

.row > :first-child {
    display: flex;
    align-items: center;
    width: 211px;
    padding: 2px;
    background: #efefef;
}

.short { height: 23px; }
.tall { height: 70px; }

.cell {
    display: flex;
    align-items: flex-end;
    gap: 6px;
    flex: 1;
    padding: 2px;
    background: #dee3e7;
    font-size: 11px;
    font-weight: normal;
}

.cell textarea, .cell input {
    border: 2px solid;
    border-color: #000 #b0b0b0 #b0b0b0 #000;
    background: #fff;
}

.cell textarea {
    width: 243px;
    height: 60px;
    margin-bottom: 4px;
    resize: none;
    text-decoration: underline dotted #e02020 1px;
}

.cell input {
    width: 316px;
    height: 20px;
}

.attach {
    width: 66px;
    height: 19px;
    border: 2px solid;
    border-color: #b0b0b0 #000 #000 #b0b0b0;
    background: #fafafa;
}

.vscroll {
    display: flex;
    flex-direction: column;
    width: 16px;
    background: #eef3fc;
}

.vscroll button, .hscroll button, .addrbox button {
    display: grid;
    place-items: center;
    flex: none;
    width: 16px;
    height: 17px;
    border: 1px solid #8fa5c4;
    border-radius: 2px;
    background: linear-gradient(#f4f8ff, #b8cdea);
}

.track {
    flex: 1;
    padding-top: 139px;
}

.thumb {
    display: grid;
    place-items: center;
    height: 270px;
    border: 1px solid #8fa5c4;
    border-radius: 2px;
    background: linear-gradient(90deg, #f2f7ff, #b4ccf0);
}

.status {
    flex: none;
    height: 22px;
    padding: 4px 5px;
    border-top: 1px solid #d0d0d8;
    background: #eff2f7;
}

/* File Upload */
.upload {
    position: absolute;
    left: 0;
    top: 27px;
    width: 430px;
    border: 4px solid #7ab2ea;
    border-top: 0;
    border-radius: 8px 8px 0 0;
    overflow: hidden;
    background: #ebe9ed;
}

.upload .titlebar {
    padding: 2px 4px 0;
}

.upload-body {
    display: grid;
    grid-template-columns: 86px 1fr;
    column-gap: 6px;
    padding: 8px 7px 12px 6px;
}

.lookin {
    grid-column: 1 / 3;
    display: flex;
    align-items: center;
    gap: 7px;
    padding-left: 47px;
    margin-bottom: 7px;
}

.combo {
    display: flex;
    align-items: center;
    gap: 4px;
    flex: 1;
    height: 22px;
    padding-left: 4px;
    border: 1px solid #9c9ca8;
    background: #fff;
}

.places {
    height: 338px;
    padding-top: 1px;
    border: 1px solid;
    border-color: #fff #b4b4bc #b4b4bc #fff;
    background: #f6f5fb;
    overflow: hidden;
}

.places a {
    display: flex;
    flex-direction: column;
    align-items: center;
    gap: 2px;
    height: 71px;
    padding-top: 4px;
    border: 1px solid transparent;
    border-radius: 3px;
    text-align: center;
}

.places .on {
    height: 69px;
    margin-bottom: 2px;
    border-color: #8c949c;
    background: #fff;
}

.listbox {
    height: 283px;
    padding: 2px 1px;
    border: 1px solid #9c9ca8;
    background: #fff;
    display: flex;
    flex-direction: column;
    justify-content: space-between;
}

.listbox li {
    display: flex;
    align-items: center;
    gap: 2px;
    height: 17px;
    white-space: nowrap;
}

.hscroll {
    display: flex;
    gap: 1px;
    background: #eef3fc;
}

.hthumb {
    display: grid;
    place-items: center;
    width: 138px;
    border: 1px solid #8fa5c4;
    border-radius: 2px;
    background: linear-gradient(#eef5ff, #b4ccf0);
}

.files p {
    margin: 14px 2px 0;
}

/* Control Panel */
.panel {
    position: absolute;
    left: 196px;
    top: -17px;
    width: 798px;
    height: 599px;
    display: flex;
    flex-direction: column;
    border: 4px solid #84b8ec;
    border-top: 0;
    outline: 1px solid #5a94d4;
    outline-offset: -1px;
    background: #ebe9ed;
}

.panel .titlebar {
    height: 30px;
    padding: 4px 2px 0;
}

.menu {
    display: flex;
    align-items: center;
    flex: none;
    height: 22px;
    border-bottom: 1px solid #d0d0d8;
    background: linear-gradient(90deg, #fafafc, #e9e7eb 60%);
    color: #9a9a9a;
}

.menu a {
    padding: 0 8px;
}

.brand {
    display: grid;
    place-items: center;
    width: 40px;
    height: 22px;
    margin-left: auto;
    background: #fff;
}

.brand svg {
    width: 20px;
    height: 20px;
}

.tools {
    display: flex;
    align-items: center;
    flex: none;
    height: 42px;
    padding-left: 8px;
    border-bottom: 1px solid #d0d0d8;
    background: linear-gradient(90deg, #fafafc, #e9e7eb 60%);
}

.tools button {
    display: flex;
    align-items: center;
    gap: 2px;
    height: 34px;
    padding-right: 10px;
}

.tools .off {
    color: #9a9a9a;
}

.tools .drop {
    margin-left: 7px;
}

.tools .go-up {
    padding-right: 4px;
}

.tools .split {
    padding-left: 6px;
    border-left: 1px solid #c8c8d0;
}

.address {
    display: flex;
    align-items: center;
    flex: none;
    height: 23px;
    padding-left: 4px;
    border-bottom: 1px solid #a4a4ac;
    background: linear-gradient(90deg, #fafafc, #e9e7eb 60%);
}

.addrbox {
    display: flex;
    align-items: center;
    flex: 1;
    gap: 3px;
    height: 22px;
    margin-left: 4px;
    padding: 0 1px 0 2px;
    border: 1px solid #9c9ca8;
    background: #fff;
}

.addrbox input {
    flex: 1;
}

.addrbox button {
    height: 20px;
}

.go {
    display: flex;
    align-items: center;
    gap: 4px;
    width: 63px;
    height: 22px;
    padding-left: 7px;
}

.go svg {
    width: 18px;
    height: 18px;
}

.links {
    display: flex;
    gap: 7px;
    width: 50px;
    padding-left: 3px;
    border-left: 1px solid #c8c8d0;
}

.links b {
    font-size: 14px;
    line-height: 8px;
}

.explorer {
    display: flex;
    flex: 1;
    min-height: 0;
}

.explorer aside {
    width: 209px;
    padding: 20px 12px;
    background: linear-gradient(#629fe6, #5470c0);
}

.task {
    margin-bottom: 15px;
    padding-bottom: 9px;
    border: 1px solid #1c3f8c;
    border-top: 0;
    background: #fff;
    color: #0c327d;
}

.task h3 {
    display: flex;
    align-items: center;
    height: 23px;
    margin: 0 -1px 7px;
    padding-left: 12px;
    background: linear-gradient(#80bcf2, #3c78d0 60%, #2c60bc);
    color: #d6e8fc;
    font-size: 11px;
}

.task a {
    display: flex;
    align-items: center;
    gap: 6px;
    height: 20px;
    padding-left: 12px;
}

.primary h3 {
    padding-left: 0;
    background: linear-gradient(#4468a4, #0c3080 60%, #103888);
}

.primary h3 .i32 {
    margin-top: -9px;
}

.chev {
    width: 12px;
    height: 12px;
    margin: 0 8px 0 auto;
}

.icons {
    display: grid;
    grid-template-columns: repeat(auto-fill, 75px);
    grid-auto-rows: 75px;
    align-content: start;
    flex: 1;
    padding: 4px 1px 0;
    overflow: hidden;
    background: #fff;
}

.icons a {
    display: flex;
    flex-direction: column;
    align-items: center;
    gap: 5px;
    text-align: center;
    white-space: nowrap;
}

.icons .picked span {
    padding: 0 1px 2px;
    background: #ebe9ed;
}

/* Error message */
.alert {
    position: absolute;
    left: 333px;
    top: 346px;
    border: 2px solid #2c5cb8;
    border-radius: 7px 7px 0 0;
    overflow: hidden;
    background: #ebe9ed;
}

.alert .titlebar {
    height: 27px;
    padding: 0 4px;
}

.cap.close {
    border-color: #f4d8d4;
    background: linear-gradient(135deg, #e8947c, #c8442c);
}

.alert-body {
    display: flex;
    flex-direction: column;
    align-items: center;
    gap: 16px;
    padding: 11px 8px 11px 12px;
}

.ok {
    width: 75px;
    height: 23px;
    border: 1px solid #000;
    background: #ebe9ed;
    box-shadow: inset 1px 1px #fff, inset -2px -2px #9c9ca4;
}

/* Taskbar */
.taskbar {
    display: flex;
    align-items: stretch;
    flex: none;
    height: 30px;
    color: #fff;
    background: linear-gradient(#1c50a8, #84c4f6 8%, #5c9ce8 35%, #3468c8 65%, #2448a4);
}

.start {
    display: flex;
    align-items: center;
    gap: 5px;
    width: 98px;
    padding-left: 10px;
    border-radius: 0 10px 10px 0;
    background: linear-gradient(#2c7c34, #74c86c 12%, #38a03c 45%, #38a438 75%, #1c7424);
    font-family: "Open Sans", sans-serif;
    font-size: 17px;
    font-style: italic;
    font-weight: bold;
    line-height: 20px;
    text-shadow: 1px 1px 2px #124a18;
}

.start svg {
    width: 19px;
    height: 19px;
}

.tasks {
    display: flex;
    flex: 1;
    gap: 2px;
    padding: 3px 0 2px 9px;
}

.tasks button {
    display: flex;
    align-items: center;
    gap: 4px;
    flex: 0 1 158px;
    padding-left: 8px;
    border: 1px solid #2c58b0;
    border-radius: 3px;
    background: linear-gradient(#6aa8f0, #3c74d4 50%, #3060c0);
    white-space: nowrap;
}

.tasks .active {
    background: linear-gradient(#12306c, #1c4898);
}

.lang {
    align-self: center;
    padding: 1px;
    margin-right: 21px;
    background: #2c58a8;
}

.tray {
    display: flex;
    align-items: center;
    gap: 2px;
    padding-right: 13px;
    background: linear-gradient(#fff, #d4e0f0 40%, #88a4d4);
    color: #000;
}

.less {
    margin-left: -9px;
}

.less svg {
    width: 18px;
    height: 18px;
}

.tray time {
    margin-left: 5px;
}
```
